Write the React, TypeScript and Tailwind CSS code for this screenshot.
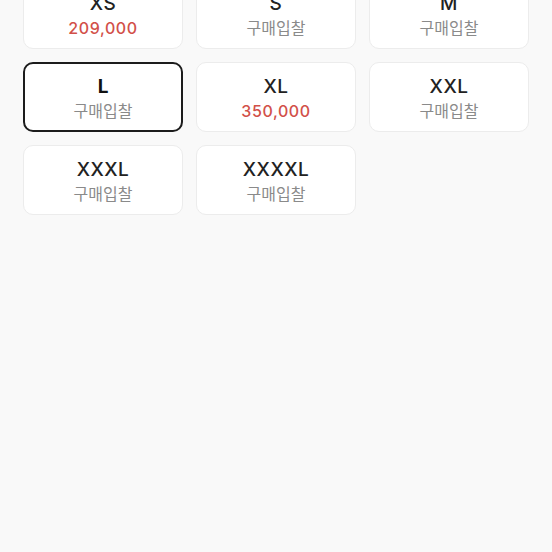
import React from "react";

type Item = { size: string; price?: string; selected?: boolean };

const items: Item[] = [
  { size: "XS", price: "209,000" },
  { size: "S" },
  { size: "M" },
  { size: "L", selected: true },
  { size: "XL", price: "350,000" },
  { size: "XXL" },
  { size: "XXXL" },
  { size: "XXXXL" },
];

export default function App() {
  return (
    <div
      className="w-[552px] h-[552px] overflow-hidden bg-[#f9f9f9] px-[23px]"
      style={{ fontFamily: 'Inter, "Noto Sans CJK KR", sans-serif' }}
    >
      <div className="grid grid-cols-3 gap-[13px] -mt-[21px]">
        {items.map((it) => (
          <div
            key={it.size}
            className={
              it.selected
                ? "h-[70px] rounded-[10px] bg-white border-2 border-[#1c1c1c] pt-[11px] flex flex-col items-center"
                : "h-[70px] rounded-[10px] bg-white border border-[#ececec] pt-[12px] flex flex-col items-center"
            }
          >
            <div
              className={
                it.selected
                  ? "text-[19px] leading-[24px] font-bold text-[#111]"
                  : "text-[19px] leading-[24px] font-medium text-[#222] tracking-[0.5px]"
              }
            >
              {it.size}
            </div>
            {it.price ? (
              <div className="text-[16px] leading-[24px] font-medium text-[#d25049] tracking-[0.6px]">
                {it.price}
              </div>
            ) : (
              <div className="text-[16px] leading-[24px] text-[#8a8a8a]">구매입찰</div>
            )}
          </div>
        ))}
      </div>
    </div>
  );
}
